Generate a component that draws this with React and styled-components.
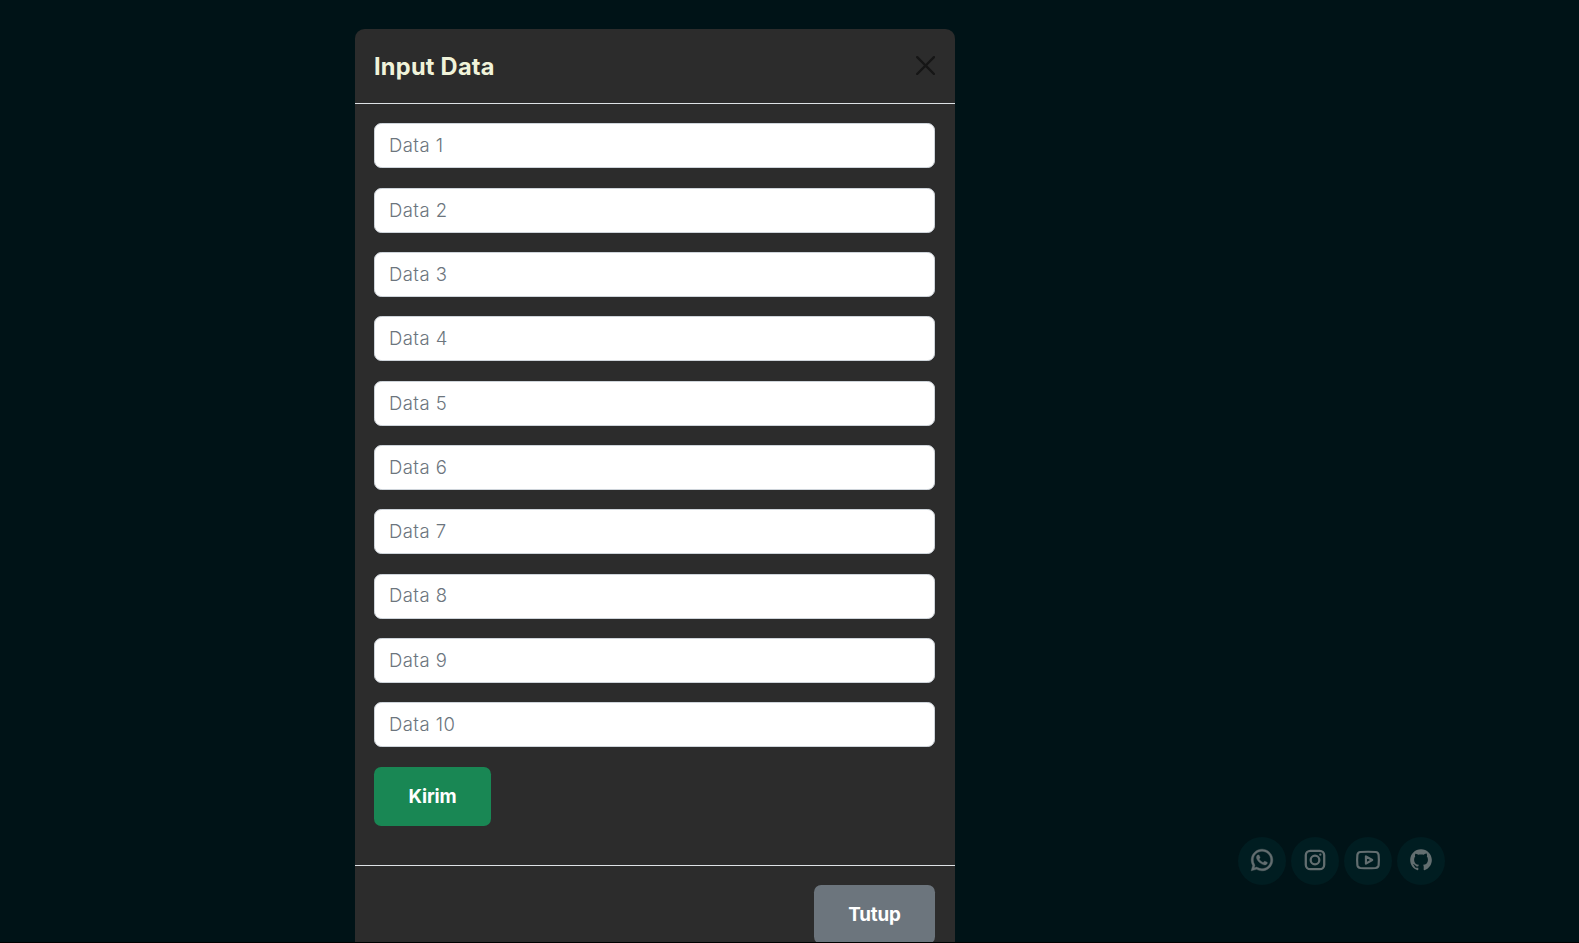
import React from "react";
import styled, { createGlobalStyle } from "styled-components";
import { RiWhatsappLine, RiGithubFill } from "react-icons/ri";

const GlobalStyle = createGlobalStyle`
  *, *::before, *::after { box-sizing: border-box; }
  html, body { margin: 0; background: #001317; overflow: hidden; }
  body { font-family: Inter, "Liberation Sans", sans-serif; }
`;

const Page = styled.div`
  display: flex;
  justify-content: space-between;
  width: 100%;
  height: 943px;
  padding: 29px 134px 0 355px;
  overflow: hidden;
  background: #001317;
  border-bottom: 1px solid #000;
`;

const Modal = styled.section`
  width: 600px;
  height: 960px;
  flex: none;
  background: #2c2c2c;
  border-radius: 9.6px;
`;

const Header = styled.header`
  display: flex;
  align-items: center;
  justify-content: space-between;
  height: 75px;
  padding: 0 20px 0 19px;
  border-bottom: 1px solid #dee2e6;
`;

const Title = styled.h1`
  margin: 2px 0 0;
  color: #f0f3da;
  font-size: 23.6px;
  font-weight: 700;
  line-height: 36px;
  letter-spacing: 0.25px;
`;

const CloseButton = styled.button`
  display: flex;
  margin-bottom: 1px;
  padding: 0;
  border: 0;
  background: none;
  color: #161616;
`;

const Form = styled.form`
  display: flex;
  flex-direction: column;
  align-items: flex-start;
  height: 761px;
  padding: 19.4px 20px 0 19px;
`;

const Field = styled.input`
  width: 100%;
  height: 45px;
  margin: 0 0 19.33px;
  padding: 0 14px 1.4px;
  border: 1px solid #ced4da;
  border-radius: 7.2px;
  background: #fff;
  font: 300 18.5px Inter, "Liberation Sans", sans-serif;
  letter-spacing: 0.45px;
  outline: none;
  &::placeholder { color: #6c757d; opacity: 1; }
`;

const Button = styled.button`
  width: ${(p) => p.$width}px;
  height: 59px;
  padding: 0;
  border: 0;
  border-radius: 7.2px;
  background: ${(p) => p.$color};
  color: #fff;
  font: 700 18.8px Inter, "Liberation Sans", sans-serif;
  letter-spacing: -0.2px;
`;

const Footer = styled.footer`
  display: flex;
  justify-content: flex-end;
  padding: 19px 20px;
  border-top: 1px solid #dee2e6;
`;

const Socials = styled.nav`
  display: flex;
  align-self: flex-end;
  gap: 5px;
  margin-bottom: 57px;
`;

const SocialLink = styled.a`
  display: grid;
  place-items: center;
  width: 48px;
  height: 48px;
  padding-bottom: 2px;
  border-radius: 50%;
  background: #001d21;
  color: #636e70;
`;

const WhatsappIcon = styled(RiWhatsappLine)`
  stroke: currentColor;
  stroke-width: 0.35px;
`;

const CloseIcon = () => (
  <svg width="19.2" height="19.2" viewBox="0 0 16 16" fill="currentColor">
    <path d="M.293.293a1 1 0 011.414 0L8 6.586 14.293.293a1 1 0 111.414 1.414L9.414 8l6.293 6.293a1 1 0 01-1.414 1.414L8 9.414l-6.293 6.293a1 1 0 01-1.414-1.414L6.586 8 .293 1.707a1 1 0 010-1.414z" />
  </svg>
);

const InstagramIcon = () => (
  <svg width="26" height="26" viewBox="0 0 24 24" fill="none" stroke="currentColor" strokeWidth="2.1">
    <rect x="3.5" y="3.5" width="17" height="17" rx="4.2" />
    <circle cx="12" cy="12" r="4" />
    <circle cx="16.9" cy="7.1" r="1.05" fill="currentColor" stroke="none" />
  </svg>
);

const YoutubeIcon = () => (
  <svg width="26" height="26" viewBox="0 0 24 24" fill="none" stroke="currentColor" strokeWidth="2">
    <path d="M5 4.6Q12 4.1 19 4.6Q21.4 4.8 21.8 7.2Q22.3 12 21.8 16.8Q21.4 19.1 19 19.4Q12 19.9 5 19.4Q2.6 19.1 2.2 16.8Q1.7 12 2.2 7.2Q2.6 4.8 5 4.6Z" />
    <path d="M10.1 8.6v6.8l5.8-3.4z" strokeWidth="2" strokeLinejoin="round" />
  </svg>
);

const fields = Array.from({ length: 10 }, (_, i) => `Data ${i + 1}`);

export default function App() {
  return (
    <>
      <GlobalStyle />
      <Page>
        <Modal>
          <Header>
            <Title>Input Data</Title>
            <CloseButton aria-label="Close"><CloseIcon /></CloseButton>
          </Header>
          <Form>
            {fields.map((name) => <Field key={name} placeholder={name} />)}
            <Button type="button" $width={117} $color="#198754">Kirim</Button>
          </Form>
          <Footer>
            <Button type="button" $width={121} $color="#6c757d">Tutup</Button>
          </Footer>
        </Modal>
        <Socials>
          <SocialLink><WhatsappIcon size={26} /></SocialLink>
          <SocialLink><InstagramIcon /></SocialLink>
          <SocialLink><YoutubeIcon /></SocialLink>
          <SocialLink><RiGithubFill size={26} /></SocialLink>
        </Socials>
      </Page>
    </>
  );
}
